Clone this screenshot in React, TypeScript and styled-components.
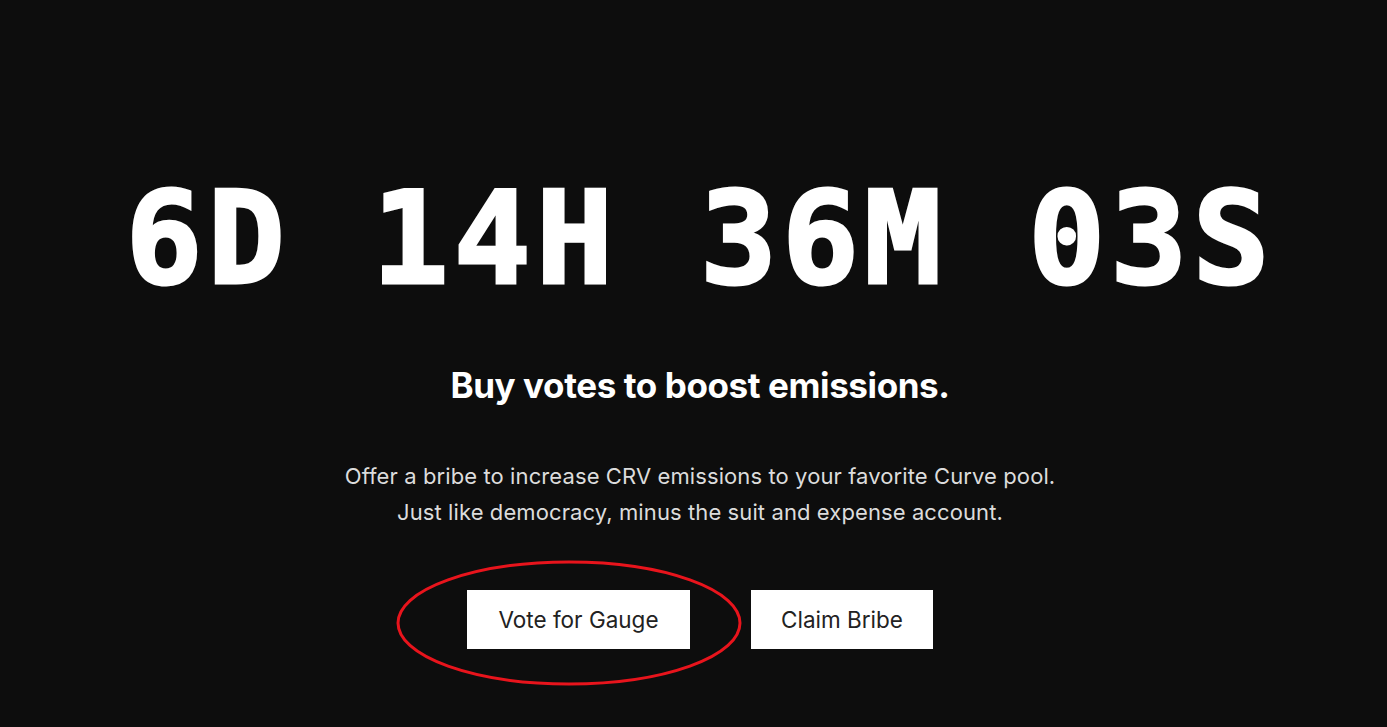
import React from 'react'
import styled, { createGlobalStyle } from 'styled-components'

const GlobalStyle = createGlobalStyle`
  html, body {
    margin: 0;
    padding: 0;
    background: #0d0d0d;
  }
  body {
    font-family: Inter, "Noto Sans", "Liberation Sans", sans-serif;
  }
`;

const Page = styled.div`
  min-height: 727px;
  display: flex;
  flex-direction: column;
  align-items: center;
  padding-left: 13px;
  box-sizing: border-box;
  color: #fff;
`;

const Countdown = styled.h1`
  margin: 174px 0 0;
  font-family: "DejaVu Sans Mono", "Liberation Mono", monospace;
  font-weight: 700;
  font-size: 128px;
  line-height: 130px;
  letter-spacing: 5px;
  white-space: pre;
  -webkit-text-stroke: 3px #fff;
  font-variant-numeric: slashed-zero;
`;

const Title = styled.h2`
  margin: 60px 0 0;
  font-size: 35px;
  font-weight: 700;
  letter-spacing: -0.4px;
  line-height: 42px;
`;

const Lead = styled.p`
  margin: 52px 0 0;
  font-size: 22px;
  line-height: 36px;
  color: #dcdcdc;
  text-align: center;
  letter-spacing: 0.1px;
`;

const Actions = styled.div`
  margin-top: 60px;
  display: flex;
  gap: 61px;
`;

const ButtonWrap = styled.div`
  position: relative;
`;

const Button = styled.button<{ $width: number }>`
  width: ${p => p.$width}px;
  height: 59px;
  border: none;
  border-radius: 0;
  background: #fff;
  color: #222;
  font-family: inherit;
  font-size: 22.5px;
  cursor: pointer;
`;

const Circle = styled.svg`
  position: absolute;
  left: -72px;
  top: -31px;
  pointer-events: none;
`;

const App = () => {
  return (
    <>
      <GlobalStyle />
      <Page>
        <Countdown>6D 14H 36M 03S</Countdown>
        <Title>Buy votes to boost emissions.</Title>
        <Lead>
          Offer a bribe to increase CRV emissions to your favorite Curve pool.
          <br />
          Just like democracy, minus the suit and expense account.
        </Lead>
        <Actions>
          <ButtonWrap>
            <Button $width={223}>Vote for Gauge</Button>
            <Circle width="348" height="128" viewBox="0 0 348 128">
              <ellipse cx="174" cy="64" rx="171" ry="61" fill="none" stroke="#e8141c" strokeWidth="3" />
            </Circle>
          </ButtonWrap>
          <Button $width={182}>Claim Bribe</Button>
        </Actions>
      </Page>
    </>
  )
}

export default App
